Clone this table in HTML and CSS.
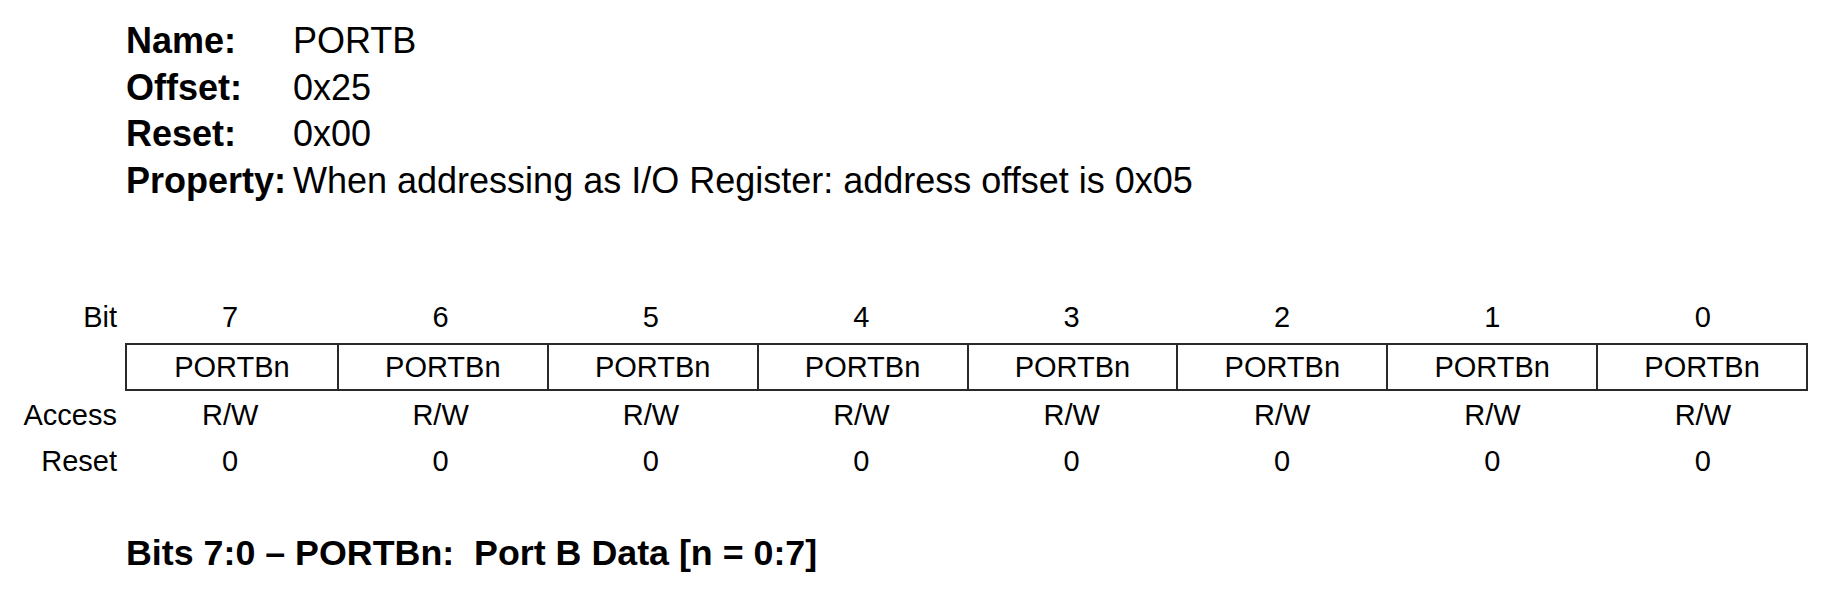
FILE: index.html
```html
<!DOCTYPE html>
<html>
<head>
<meta charset="utf-8">
<link rel="stylesheet" href="styles.css">
</head>
<body>
<div class="page">
  <div class="meta">
    <div class="k">Name:</div><div class="v">PORTB</div>
    <div class="k">Offset:</div><div class="v">0x25</div>
    <div class="k">Reset:</div><div class="v">0x00</div>
    <div class="k">Property:</div><div class="v">When addressing as I/O Register: address offset is 0x05</div>
  </div>

  <div class="reg">
    <div class="row bits">
      <div class="lbl">Bit</div>
      <div>7</div><div>6</div><div>5</div><div>4</div><div>3</div><div>2</div><div>1</div><div>0</div>
    </div>
    <div class="row boxrow">
      <div class="lbl"></div>
      <div class="cells">
        <div>PORTBn</div><div>PORTBn</div><div>PORTBn</div><div>PORTBn</div><div>PORTBn</div><div>PORTBn</div><div>PORTBn</div><div>PORTBn</div>
      </div>
    </div>
    <div class="row access">
      <div class="lbl">Access</div>
      <div>R/W</div><div>R/W</div><div>R/W</div><div>R/W</div><div>R/W</div><div>R/W</div><div>R/W</div><div>R/W</div>
    </div>
    <div class="row reset">
      <div class="lbl">Reset</div>
      <div>0</div><div>0</div><div>0</div><div>0</div><div>0</div><div>0</div><div>0</div><div>0</div>
    </div>
  </div>

  <h2 class="heading">Bits 7:0 – PORTBn:&nbsp; Port B Data [n = 0:7]</h2>
</div>
</body>
</html>
```

FILE: styles.css
```css
html, body {
  margin: 0;
  padding: 0;
  background: #ffffff;
}
body {
  font-family: "Liberation Sans", Arial, sans-serif;
  color: #000;
}
.page {
  width: 1831px;
  height: 592px;
  overflow: hidden;
  padding-top: 18px;
  box-sizing: border-box;
}
.meta {
  display: grid;
  grid-template-columns: 167px auto;
  padding-left: 126px;
  font-size: 36px;
  line-height: 46.7px;
}
.meta .k {
  font-weight: bold;
}
.reg {
  margin-top: 88px;
  width: 1808px;
  font-size: 29px;
}
.row {
  display: grid;
  grid-template-columns: 125px repeat(8, 1fr);
  text-align: center;
}
.row .lbl {
  text-align: right;
  padding-right: 8px;
}
.bits { height: 50px; line-height: 48px; }
.access { height: 48px; line-height: 48px; }
.reset { height: 44px; line-height: 44px; }
.boxrow {
  grid-template-columns: 125px 1fr;
  height: 48px;
}
.cells {
  display: grid;
  grid-template-columns: repeat(8, 1fr);
  border: 2px solid #2a2a2a;
  line-height: 44px;
}
.cells > div + div {
  border-left: 2px solid #2a2a2a;
}
.heading {
  margin: 48px 0 0 126px;
  font-size: 35.8px;
  line-height: 44px;
  font-weight: bold;
}
```
